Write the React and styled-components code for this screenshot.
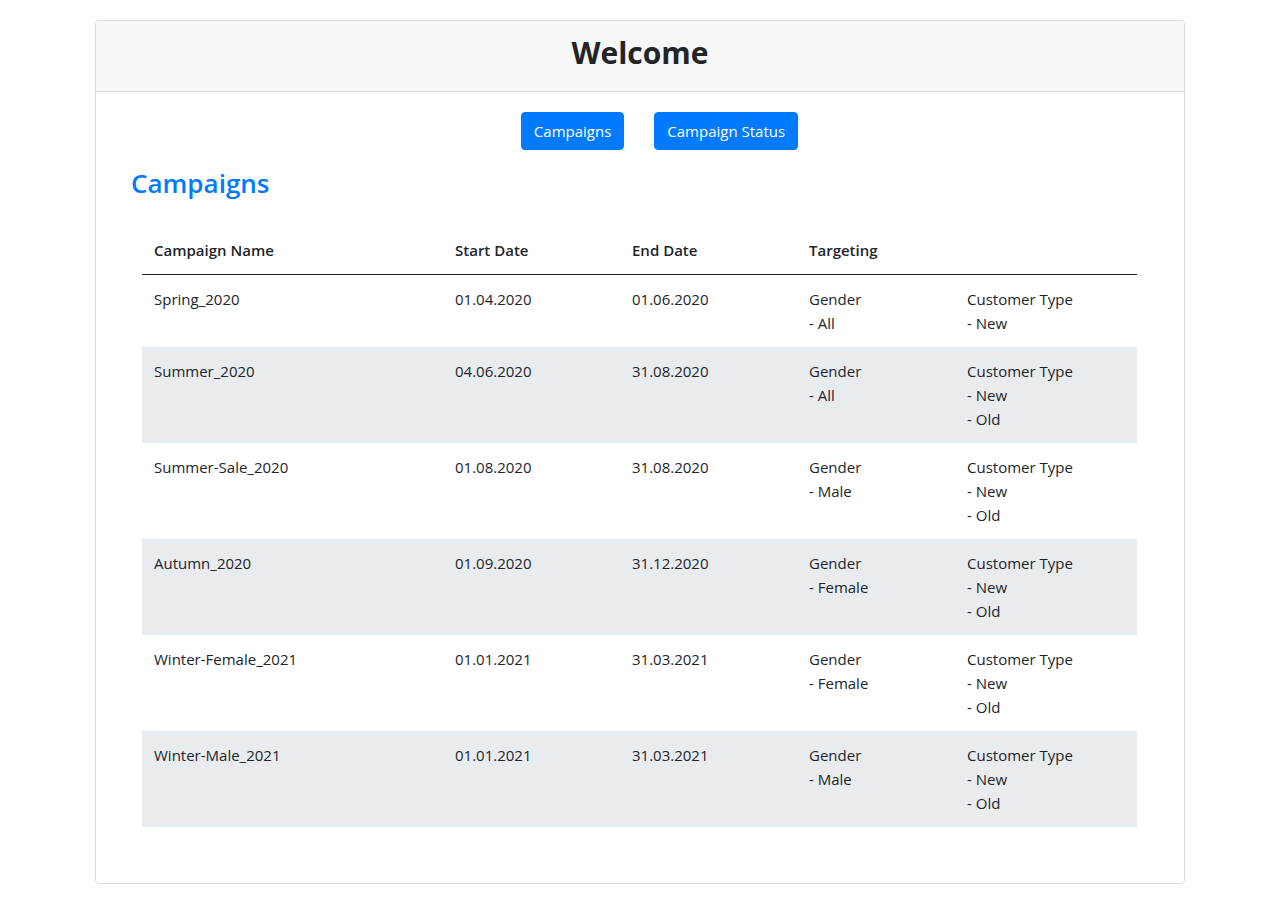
import styled, { createGlobalStyle } from "styled-components";

const GlobalStyle = createGlobalStyle`
  body {
    margin: 0;
    background: #fff;
    font-family: "Open Sans", "Noto Sans", "Liberation Sans", sans-serif;
    font-size: 15px;
    color: #212529;
  }
`;

const Page = styled.div`
  padding: 20px 94px 20px 95px;
`;

const Card = styled.div`
  border: 1px solid #dcdcdc;
  border-radius: 4px;
  background: #fff;
`;

const CardHeader = styled.div`
  height: 71px;
  box-sizing: border-box;
  padding-bottom: 8px;
  background: #f7f7f7;
  border-bottom: 1px solid #dcdcdc;
  border-radius: 4px 4px 0 0;
  display: flex;
  align-items: center;
  justify-content: center;
`;

const Title = styled.h2`
  margin: 0;
  font-size: 30px;
  font-weight: 700;
  color: #212529;
`;

const CardBody = styled.div`
  padding: 20px 35px 56px 35px;
`;

const Nav = styled.div`
  display: flex;
  justify-content: center;
  gap: 30px;
  padding-left: 39px;
`;

const Button = styled.button`
  height: 38px;
  padding: 0 12px;
  border: 1px solid #007bff;
  border-radius: 4px;
  background: #007bff;
  color: #fff;
  font-family: inherit;
  font-size: 15px;
  cursor: pointer;
`;

const Heading = styled.h3`
  margin: 16px 0 26px;
  font-size: 26px;
  line-height: 34px;
  font-weight: 600;
  color: #007bff;
`;

const Table = styled.table`
  margin-left: 11px;
  width: 995px;
  border-collapse: collapse;
  table-layout: fixed;
`;

const Th = styled.th`
  text-align: left;
  font-weight: 600;
  padding: 12px;
  line-height: 24px;
  border-bottom: 1px solid #212529;
`;

const Row = styled.tr`
  background: ${(p) => (p.$striped ? "#e9ecef" : "transparent")};
`;

const Td = styled.td`
  vertical-align: top;
  padding: 12px;
  line-height: 24px;
`;

const Line = styled.div``;

const campaigns = [
  { name: "Spring_2020", start: "01.04.2020", end: "01.06.2020", gender: ["All"], types: ["New"] },
  { name: "Summer_2020", start: "04.06.2020", end: "31.08.2020", gender: ["All"], types: ["New", "Old"] },
  { name: "Summer-Sale_2020", start: "01.08.2020", end: "31.08.2020", gender: ["Male"], types: ["New", "Old"] },
  { name: "Autumn_2020", start: "01.09.2020", end: "31.12.2020", gender: ["Female"], types: ["New", "Old"] },
  { name: "Winter-Female_2021", start: "01.01.2021", end: "31.03.2021", gender: ["Female"], types: ["New", "Old"] },
  { name: "Winter-Male_2021", start: "01.01.2021", end: "31.03.2021", gender: ["Male"], types: ["New", "Old"] },
];

export default function App() {
  return (
    <Page>
      <GlobalStyle />
      <Card>
        <CardHeader>
          <Title>Welcome</Title>
        </CardHeader>
        <CardBody>
          <Nav>
            <Button>Campaigns</Button>
            <Button>Campaign Status</Button>
          </Nav>
          <Heading>Campaigns</Heading>
          <Table>
            <colgroup>
              <col style={{ width: 301 }} />
              <col style={{ width: 177 }} />
              <col style={{ width: 177 }} />
              <col style={{ width: 158 }} />
              <col style={{ width: 182 }} />
            </colgroup>
            <thead>
              <tr>
                <Th>Campaign Name</Th>
                <Th>Start Date</Th>
                <Th>End Date</Th>
                <Th>Targeting</Th>
                <Th></Th>
              </tr>
            </thead>
            <tbody>
              {campaigns.map((c, i) => (
                <Row key={c.name} $striped={i % 2 === 1}>
                  <Td>{c.name}</Td>
                  <Td>{c.start}</Td>
                  <Td>{c.end}</Td>
                  <Td>
                    <Line>Gender</Line>
                    {c.gender.map((g) => (
                      <Line key={g}>- {g}</Line>
                    ))}
                  </Td>
                  <Td>
                    <Line>Customer Type</Line>
                    {c.types.map((t) => (
                      <Line key={t}>- {t}</Line>
                    ))}
                  </Td>
                </Row>
              ))}
            </tbody>
          </Table>
        </CardBody>
      </Card>
    </Page>
  );
}
